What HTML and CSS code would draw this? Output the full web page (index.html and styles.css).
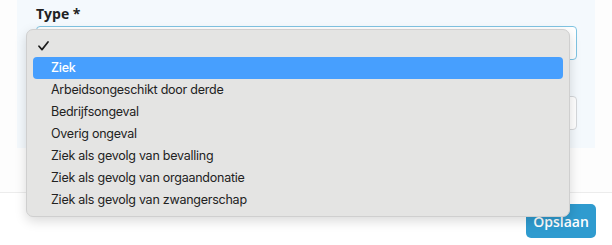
FILE: index.html
```html
<!DOCTYPE html>
<html lang="nl">
<head>
    <meta charset="UTF-8">
    <title>Verzuim melden</title>
    <link rel="stylesheet" href="styles.css">
</head>
<body>
    <div class="modal">
        <div class="modal-body">
            <div class="panel">
                <div class="field">
                    <label class="label">Type *</label>
                    <div class="select focused"></div>
                </div>
                <div class="field second">
                    <div class="select"></div>
                </div>
            </div>
        </div>
        <div class="modal-footer">
            <button class="btn-save">Opslaan</button>
        </div>
    </div>

    <ul class="dropdown">
        <li class="checked">
            <svg class="check" width="11" height="10" viewBox="0 0 11 10">
                <path d="M1 5.2 L4 8.6 L10 1" fill="none" stroke="#1d1d1d" stroke-width="1.7" stroke-linecap="round" stroke-linejoin="round"/>
            </svg>
        </li>
        <li class="active">Ziek</li>
        <li>Arbeidsongeschikt door derde</li>
        <li>Bedrijfsongeval</li>
        <li>Overig ongeval</li>
        <li>Ziek als gevolg van bevalling</li>
        <li>Ziek als gevolg van orgaandonatie</li>
        <li>Ziek als gevolg van zwangerschap</li>
    </ul>
</body>
</html>
```

FILE: styles.css
```css
body{
    margin: 0;
    background: #ffffff;
    font-family: "Open Sans", "Noto Sans", sans-serif;
    color: #222;
}

.modal-body{
    padding: 0 17px;
    height: 192px;
    background: #fdfdfd;
}

.panel{
    background: #f4f9fd;
    padding: 4px 18px 18px 19px;
    height: 126px;
}

.label{
    display: block;
    font-size: 14px;
    font-weight: 700;
    line-height: 20px;
    margin-bottom: 2px;
}

.select{
    height: 32px;
    background: #fff;
    border: 1px solid #d5d8db;
    border-radius: 4px;
}

.select.focused{
    border-color: #7fc4e2;
}

.second{
    margin-top: 36px;
}

.modal-footer{
    border-top: 1px solid #ececec;
    display: flex;
    justify-content: flex-end;
    padding: 11px 16px 0;
}

.btn-save{
    width: 70px;
    height: 34px;
    background: #2f9bcf;
    color: #fff;
    border: none;
    border-radius: 5px;
    font-family: "Open Sans", "Noto Sans", sans-serif;
    font-size: 14px;
    font-weight: 600;
}

.dropdown{
    position: absolute;
    top: 29px;
    left: 26px;
    width: 530px;
    margin: 0;
    padding: 5px 6px;
    list-style: none;
    background: #e4e4e3;
    border: 1px solid #cfcfcf;
    border-radius: 7px;
    box-shadow: 0 4px 12px rgba(0, 0, 0, 0.15);
    font-family: Inter, "Noto Sans", sans-serif;
    font-size: 12.5px;
    letter-spacing: -0.25px;
}

.dropdown li{
    height: 22px;
    line-height: 22px;
    padding-left: 18px;
    border-radius: 4px;
    color: #222;
}

.dropdown li.checked{
    display: flex;
    align-items: center;
    padding-left: 5px;
}

.dropdown li.active{
    background: #479ffe;
    color: #fff;
    font-weight: 500;
}
```
